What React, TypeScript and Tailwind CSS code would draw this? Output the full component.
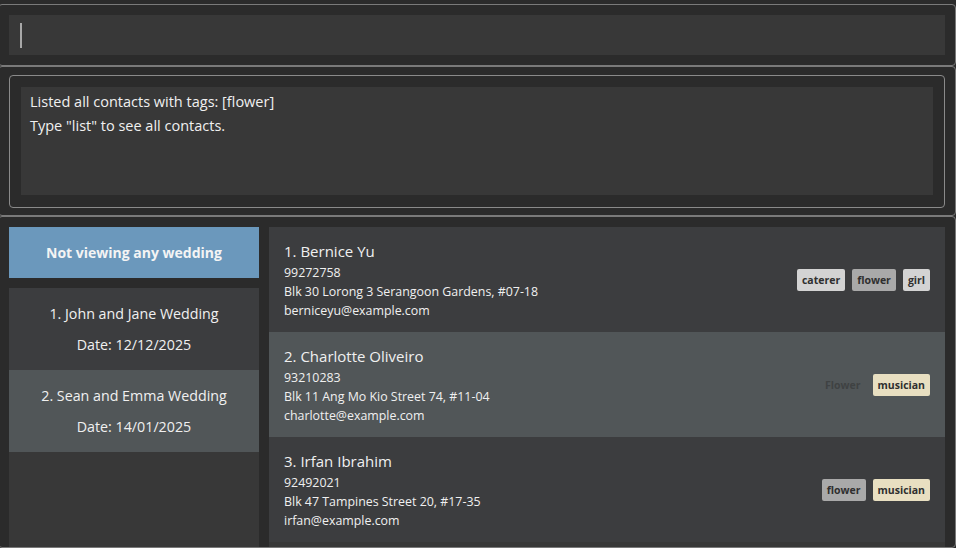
import React from "react";

const font = { fontFamily: '"Open Sans", "Noto Sans", sans-serif' };

type Tag = { label: string; cls: string };
type Person = { name: string; phone: string; address: string; email: string; tags: Tag[]; alt?: boolean };

const light = "bg-[#d3d3d3] text-[#2f2f2f]";
const gray = "bg-[#a9a9a9] text-[#2f2f2f]";
const beige = "bg-[#e8dfc1] text-[#2f2f2f]";
const ghost = "bg-transparent text-[#3f4243]";

const people: Person[] = [
  {
    name: "1. Bernice Yu",
    phone: "99272758",
    address: "Blk 30 Lorong 3 Serangoon Gardens, #07-18",
    email: "berniceyu@example.com",
    tags: [
      { label: "caterer", cls: light },
      { label: "flower", cls: gray },
      { label: "girl", cls: light },
    ],
  },
  {
    name: "2. Charlotte Oliveiro",
    phone: "93210283",
    address: "Blk 11 Ang Mo Kio Street 74, #11-04",
    email: "charlotte@example.com",
    tags: [
      { label: "Flower", cls: ghost },
      { label: "musician", cls: beige },
    ],
    alt: true,
  },
  {
    name: "3. Irfan Ibrahim",
    phone: "92492021",
    address: "Blk 47 Tampines Street 20, #17-35",
    email: "irfan@example.com",
    tags: [
      { label: "flower", cls: gray },
      { label: "musician", cls: beige },
    ],
  },
];

function Card({ p }: { p: Person }) {
  return (
    <div
      className={`flex items-center justify-between h-[105px] shrink-0 pl-[15px] pr-[15px] ${
        p.alt ? "bg-[#515658]" : "bg-[#3c3d3f]"
      }`}
    >
      <div className="flex flex-col text-[#f0f0f0] pt-[1px]">
        <div className="text-[15px] leading-[22px]">{p.name}</div>
        <div className="text-[12.4px] leading-[19px] pt-[1px]">{p.phone}</div>
        <div className="text-[12.4px] leading-[19px]">{p.address}</div>
        <div className="text-[12.4px] leading-[19px]">{p.email}</div>
      </div>
      <div className="flex gap-[7px] pt-[1px]">
        {p.tags.map((t) => (
          <span
            key={t.label}
            className={`h-[22px] px-[5px] rounded-[2px] text-[10.5px] font-bold leading-[22px] ${t.cls}`}
          >
            {t.label}
          </span>
        ))}
      </div>
    </div>
  );
}

export default function App() {
  return (
    <div className="w-[956px] h-[548px] overflow-hidden bg-[#2b2b2b] pt-[4px] flex flex-col" style={font}>
      {/* Command box */}
      <div className="ml-[-2px] w-[958px] h-[62px] shrink-0 border border-[#7a7a7a] rounded-[4px] pl-[10px] pr-[10px] pt-[10px]">
        <div className="h-[40px] w-[936px] bg-[#383838] flex items-center pl-[11px]">
          <div className="w-[2px] h-[25px] bg-[#a8a8a8]" />
        </div>
      </div>

      {/* Result display */}
      <div className="ml-[-2px] w-[958px] h-[150px] shrink-0 border border-[#7a7a7a] rounded-[4px] pl-[10px] pt-[8px]">
        <div className="w-[936px] h-[133px] border border-[#8a8a8a] rounded-[4px] pl-[11px] pt-[11px]">
          <div className="w-[912px] h-[108px] bg-[#383838] pl-[9px] pt-[3px] text-[14.5px] leading-[24px] text-[#f0f0f0]">
            <div>Listed all contacts with tags: [flower]</div>
            <div>Type "list" to see all contacts.</div>
          </div>
        </div>
      </div>

      {/* Main panel */}
      <div className="ml-[-2px] w-[958px] flex-1 border border-[#7a7a7a] rounded-[4px] pl-[10px] pt-[10px] flex gap-[10px] overflow-hidden">
        <div className="w-[250px] shrink-0 flex flex-col gap-[10px]">
          <div className="h-[51px] bg-[#6b98bc] flex items-center justify-center text-[14px] font-bold text-[#f4f4f4]">
            Not viewing any wedding
          </div>
          <div className="flex-1 bg-[#383838] flex flex-col">
            <div className="h-[82px] bg-[#3c3d3f] flex flex-col items-center justify-center text-[14.25px] leading-[31px] text-[#f0f0f0]">
              <div>1. John and Jane Wedding</div>
              <div>Date: 12/12/2025</div>
            </div>
            <div className="h-[82px] bg-[#515658] flex flex-col items-center justify-center text-[14.25px] leading-[31px] text-[#f0f0f0]">
              <div>2. Sean and Emma Wedding</div>
              <div>Date: 14/01/2025</div>
            </div>
          </div>
        </div>
        <div className="w-[676px] shrink-0 flex flex-col bg-[#383838]">
          {people.map((p) => (
            <Card key={p.name} p={p} />
          ))}
        </div>
      </div>
    </div>
  );
}
